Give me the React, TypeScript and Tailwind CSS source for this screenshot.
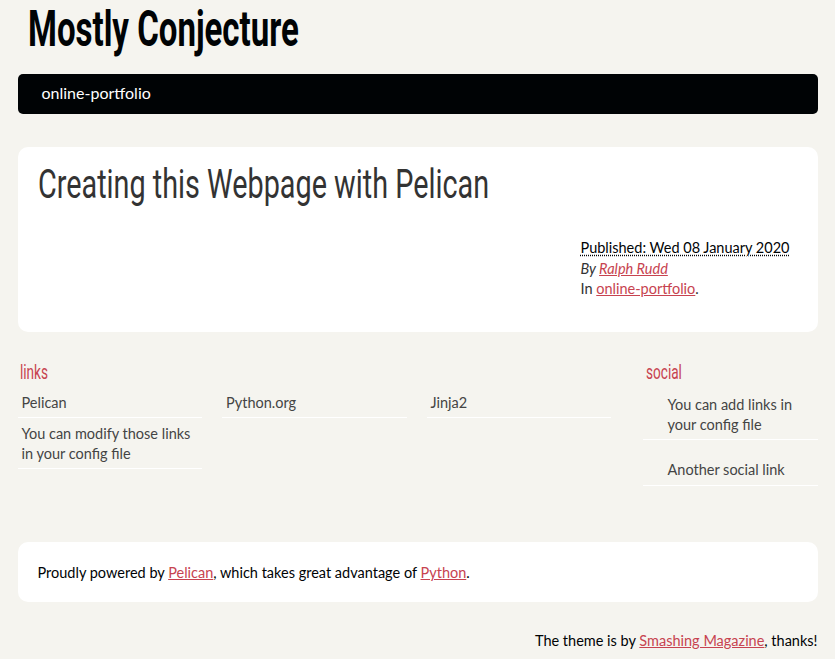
const body = { fontFamily: "Lato, 'Liberation Sans', sans-serif" };
const head = { fontFamily: "Roboto, 'Liberation Sans', sans-serif" };

function Blogroll() {
  const items = [
    "Pelican",
    "Python.org",
    "Jinja2",
    "You can modify those links in your config file",
  ];
  return (
    <div className="w-[615px]">
      <h2 style={head} className="h-[29px] pt-[2px] pl-[2px] text-[20px] leading-[24px] font-normal text-[#C74350]">
        <span className="inline-block origin-left scale-x-[0.68]">links</span>
      </h2>
      <ul className="grid grid-cols-[184.5px_184.5px_184.5px] gap-x-[20px] items-start">
        {items.map((t) => (
          <li key={t} className="border-b border-white">
            <a className="block pt-[6px] pb-[4px] pl-[4px] pr-[4px] text-[#444]">{t}</a>
          </li>
        ))}
      </ul>
    </div>
  );
}

function Social() {
  return (
    <div className="w-[175px]">
      <h2 style={head} className="h-[31px] pt-[2px] pl-[3px] text-[20px] leading-[24px] font-normal text-[#C74350]">
        <span className="inline-block origin-left scale-x-[0.68]">social</span>
      </h2>
      <ul>
        <li className="border-b border-white">
          <a className="block pt-[6px] pb-[4px] pl-[25px] text-[#444]">
            You can add links in
            <br />
            your config file
          </a>
        </li>
        <li className="border-b border-white">
          <a className="block pt-[20px] pb-[5px] pl-[25px] text-[#444]">Another social link</a>
        </li>
      </ul>
    </div>
  );
}

export default function App() {
  return (
    <div style={body} className="min-h-screen bg-[#F5F4EF] text-[14.5px] leading-[20px] text-[#000305]">
      <div className="mx-auto w-[800px] pb-8">
        {/* Banner */}
        <header className="h-[74px] pt-[1px] pl-[10px]">
          <h1 style={head} className="text-[50px] leading-[56px] font-bold text-[#000305] whitespace-nowrap">
            <span className="inline-block origin-left scale-x-[0.66]">Mostly Conjecture</span>
          </h1>
        </header>

        <nav className="h-10 rounded-[5px] bg-[#000305]">
          <a className="block pl-6 text-[16px] leading-[38px] text-white">online-portfolio</a>
        </nav>

        {/* Article */}
        <section className="mt-[33px] rounded-[10px] bg-white px-5 pt-4 pb-[32.5px]">
          <h1 style={head} className="text-[40px] leading-[44px] font-normal text-[#333] whitespace-nowrap">
            <span className="inline-block origin-left scale-x-[0.72]">Creating this Webpage with Pelican</span>
          </h1>
          <div className="mt-[31px] flex justify-end">
            <div className="w-[217px] leading-[20.5px] text-[#333]">
              <p className="text-[#000305] underline decoration-dotted underline-offset-2">
                Published: Wed 08 January 2020
              </p>
              <p className="italic">
                By <a className="text-[#C74350] underline">Ralph Rudd</a>
              </p>
              <p>
                In <a className="text-[#C74350] underline">online-portfolio</a>.
              </p>
            </div>
          </div>
        </section>

        {/* Extras */}
        <section className="mt-[26px] flex items-start justify-between">
          <Blogroll />
          <Social />
        </section>

        {/* Footer */}
        <footer className="mt-[56px] rounded-[10px] bg-white px-5 pt-[21px] pb-[19px]">
          <p>
            Proudly powered by <a className="text-[#C74350] underline">Pelican</a>, which takes great
            advantage of <a className="text-[#C74350] underline">Python</a>.
          </p>
        </footer>
        <p className="mt-[29px] text-right">
          The theme is by <a className="text-[#C74350] underline">Smashing Magazine</a>, thanks!
        </p>
      </div>
    </div>
  );
}
